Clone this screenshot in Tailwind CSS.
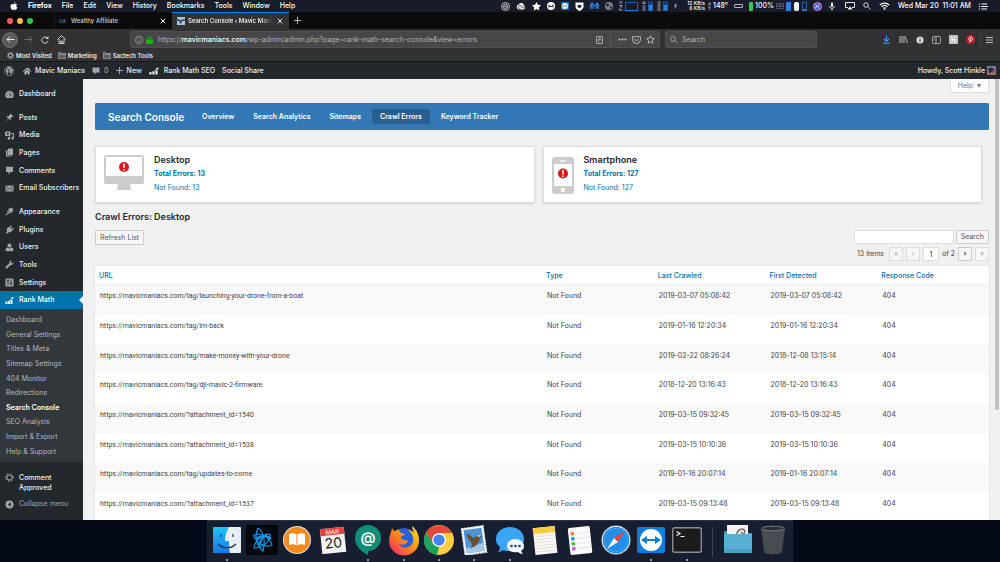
<!DOCTYPE html>
<html lang="en">
<head>
    <meta charset="UTF-8">
    <meta name="viewport" content="width=device-width, initial-scale=1.0">
    <title>Search Console ‹ Mavic Maniacs</title>
    <script src="https://cdn.jsdelivr.net/npm/@tailwindcss/browser@4"></script>
</head>
<body class="h-screen flex flex-col overflow-hidden bg-[#050a18] font-['Inter','Liberation_Sans',sans-serif] text-[7px] leading-[10px] text-[#444]">

    <!-- macOS menu bar -->
    <header class="h-3 shrink-0 flex items-center justify-between bg-[#171c28] text-white pl-[10px] pr-3">
        <nav class="flex items-center gap-[10px] font-medium">
            <svg class="w-2 h-2" viewBox="0 0 16 16" fill="#fff"><path d="M11 0c.1 1.600-1.400 3.400-3 3.400C7.800 1.800 9.400.2 11 0zM14.300 5.300c-2.600 1.600-2 4.800.5 5.800-.6 1.800-2 4.700-3.800 4.700-1.100 0-1.400-.7-2.800-.7s-1.800.7-2.800.7C3.300 15.800 1 12 1 8.500 1 5.400 3 3.900 5 3.900c1.200 0 2.200.8 3.100.8.800 0 2-.9 3.500-.9 1 0 2.100.6 2.700 1.500z"/></svg>
            <span class="font-bold">Firefox</span>
            <span>File</span>
            <span>Edit</span>
            <span>View</span>
            <span>History</span>
            <span>Bookmarks</span>
            <span>Tools</span>
            <span>Window</span>
            <span>Help</span>
        </nav>
        <div class="flex items-center font-medium">
            <div class="flex items-center gap-[6px]">
                <svg class="w-[9px] h-[9px]" viewBox="0 0 18 18" fill="none" stroke="#fff" stroke-width="1.500"><circle cx="9" cy="9" r="7.800"/><circle cx="9" cy="9" r="4"/><path d="M7 9h4"/></svg>
                <svg class="w-[10px] h-[9px]" viewBox="0 0 20 18"><path d="M6 15a5 5 0 0 1-1-9.800A6 6 0 0 1 16 6a5 5 0 0 1-1 9z" fill="#fff"/><path d="M9 12.500a3 3 0 1 1 1-4l3 3.500a2.500 2.500 0 1 0 0-4.500" fill="none" stroke="#171c28" stroke-width="1.600"/></svg>
                <svg class="w-[9px] h-[9px]" viewBox="0 0 18 18" fill="#fff"><path d="M9 0l2.800 5.500 6.200 1-4.400 4.300 1 6.200L9 14.200 3.400 17l1-6.200L0 6.500l6.200-1z"/></svg>
                <svg class="w-2 h-2" viewBox="0 0 16 16"><circle cx="8" cy="8" r="8" fill="#fff"/><path d="M4 11V6l4 4 4-4v5" fill="none" stroke="#171c28" stroke-width="2"/></svg>
                <svg class="w-2 h-2" viewBox="0 0 16 16"><rect width="16" height="16" rx="2" fill="#1b6fc4"/><circle cx="8" cy="8" r="6" fill="#fff"/><path d="M3 8l3-2v1.300h4V6l3 2-3 2V8.700H6V10z" fill="#1b6fc4"/></svg>
                <svg class="w-[9px] h-[9px]" viewBox="0 0 18 18"><path d="M1 1h16v8c0 5-4 7-8 9-4-2-8-4-8-9z" fill="#fff"/><path d="M5 6h8v2c0 2-2 4-4 4s-4-2-4-4z" fill="#171c28"/></svg>
                <svg class="w-[9px] h-2" viewBox="0 0 18 16"><path d="M2 14C0 9 1 3 4 2l5 7 5-7c3 1 4 7 2 12M4 4c-1 4 1 8 3 9M14 4c1 4-1 8-3 9" fill="none" stroke="#2a7fe0" stroke-width="2.600"/></svg>
                <svg class="w-2 h-2" viewBox="0 0 16 16"><circle cx="8" cy="8" r="8" fill="#7b7f88"/><path d="M3 3l4 1 1 3-3 2-3-2zM10 9l4-1-1 4-3 2z" fill="#171c28"/></svg>
            </div>
            <!-- system monitors -->
            <div class="flex items-center gap-[2px] pl-[6px] pr-[6px]">
                <svg class="w-1 h-[10px]" viewBox="0 0 4 10" stroke="#c9cdd6" fill="none"><path d="M.5 1h3M.5 2.500h1M.5 4.500h3M3 6h-2M.5 7.500v1.500h3" stroke-width=".8"/></svg>
                <span class="w-[13px] h-[9px] border border-[#1f5ea8] border-b-[#2a7fe0] mr-[2px]"></span>
                <svg class="w-1 h-[10px]" viewBox="0 0 4 10" stroke="#c9cdd6" fill="none"><path d="M.5 1h3M.5 2.500h3M.5 5h3M.5 7h3M.5 9h3" stroke-width=".8"/></svg>
                <span class="w-[5px] h-[10px] border border-[#1f5ea8] border-t-4 border-t-[#123a6b] bg-[#2a7fe0] mr-[2px]"></span>
                <svg class="w-1 h-[10px]" viewBox="0 0 4 10" stroke="#c9cdd6" fill="none"><path d="M.5 1h3M.5 3h3M.5 5h3M.5 7h3M.5 9h3" stroke-width=".8"/></svg>
                <span class="w-[5px] h-[10px] border border-[#1f5ea8] border-t-4 border-t-[#123a6b] bg-[#2a7fe0]"></span>
            </div>
            <svg class="w-[3px] h-[6px]" viewBox="0 0 3 6" stroke="#c9cdd6" fill="none"><path d="M2.500.5L.5 2.500h2L.5 5.500" stroke-width=".8"/></svg>
            <div class="text-[5px] leading-[5px] text-right pl-[10px] pr-[3px]">
                <div>12 KB/s</div>
                <div>6 KB/s</div>
            </div>
            <svg class="w-[3px] h-[10px] mr-[2px]" viewBox="0 0 4 10" stroke="#c9cdd6" fill="none"><path d="M.5 1h3L1 3h2.500M.5 5h3M.5 7h3M.5 9h3" stroke-width=".8"/></svg>
            <span class="mr-[6px]">148°</span>
            <span class="w-[9px] h-1 rounded-[1px] border border-[#b6bac4] mr-[6px]"></span>
            <span class="w-1 h-[9px] rounded-[1px] bg-[#35c759] mr-[2px]"></span>
            <span>100%</span>
            <svg class="w-2 h-[6px] mx-[2px]" viewBox="0 0 16 12"><rect x=".5" y=".5" width="15" height="11" rx="2" fill="none" stroke="#a2a7b1"/><path d="M3 4h10M3 7h10" stroke="#a2a7b1" stroke-width="1.500" stroke-dasharray="2 1"/></svg>
            <span class="w-[5px] h-[9px] bg-[#2a7fe0] mr-[3px]"></span>
            <span class="w-[5px] h-[9px] rounded-[2px] bg-white mr-[3px]"></span>
            <span class="w-[5px] h-[9px] border border-[#2a5f9e] border-b-2 border-b-[#2a7fe0] mr-[6px]"></span>
            <svg class="w-[9px] h-[9px] mr-[7px]" viewBox="0 0 18 18"><circle cx="9" cy="9" r="8" fill="#3d5bd0" stroke="#ef7fc4" stroke-width="2"/><path d="M4 12L13 5M5 6l8 7" fill="none" stroke="#fff" stroke-width="1.600"/></svg>
            <svg class="w-[6px] h-[9px] mr-[10px]" viewBox="0 0 12 18"><rect x="4" y="1" width="4" height="9" rx="2" fill="#fff"/><path d="M1 8c0 6 10 6 10 0M6 12v5" fill="none" stroke="#fff" stroke-width="1.600"/></svg>
            <svg class="w-[10px] h-2 mr-2" viewBox="0 0 20 16"><path d="M6 11H1V1h18v10h-5" fill="none" stroke="#fff" stroke-width="1.800"/><path d="M10 9l5 6H5z" fill="#fff"/></svg>
            <svg class="w-2 h-2 mr-2" viewBox="0 0 16 16" fill="none" stroke="#fff" stroke-width="1.600"><circle cx="6" cy="6" r="4.500"/><path d="M9.500 9.500l5.500 5.500"/></svg>
            <svg class="w-[11px] h-2 mr-2" viewBox="0 0 22 16" fill="none" stroke="#fff" stroke-width="2.200"><path d="M1.500 6a14 14 0 0 1 19 0M5 9.500a9 9 0 0 1 12 0M8.500 12.500a4 4 0 0 1 5 0"/><circle cx="11" cy="14.500" r=".6"/></svg>
            <span class="whitespace-pre mr-2">Wed Mar 20  11:01 AM</span>
            <svg class="w-[9px] h-[7px]" viewBox="0 0 18 14" stroke="#fff" stroke-width="2"><path d="M0 2h2M0 7h2M0 12h2M5 2h11M5 7h13M5 12h11"/></svg>
        </div>
    </header>

    <!-- Browser tabs -->
    <div class="h-[17px] shrink-0 flex items-stretch bg-[#0b0b0b] text-[#d0d0d2] text-[6px] font-medium">
        <div class="w-[54px] flex items-center gap-1 pl-[7px]">
            <span class="size-[6px] rounded-full bg-[#fc5b57]"></span>
            <span class="size-[6px] rounded-full bg-[#fdbc40]"></span>
            <span class="size-[6px] rounded-full bg-[#34c84a]"></span>
        </div>
        <div class="w-[118px] flex items-center border-l border-[#1d1d1d] pl-1 pr-[6px]">
            <span class="text-[5px] font-bold text-[#41688e] w-3">UA</span>
            <span class="flex-1">Wealthy Affiliate</span>
            <button class="flex" aria-label="Close tab"><svg class="size-[6px]" viewBox="0 0 12 12" stroke="#fff" stroke-width="1.800"><path d="M1.500 1.500l9 9M10.500 1.500l-9 9"/></svg></button>
        </div>
        <div class="w-[117px] flex items-center bg-[#323234] border-t border-[#0a84ff] pl-[5px] pr-[6px] text-white">
            <svg class="size-2 mr-[3px] shrink-0" viewBox="0 0 16 16"><rect width="16" height="16" fill="#a9c4dc"/><path d="M0 3l6 3 10-2v3L9 9v4H5V9L0 7z" fill="#3a4b62"/></svg>
            <span class="flex-1 overflow-hidden whitespace-nowrap mr-1 [mask-image:linear-gradient(to_right,#000_85%,transparent)]">Search Console ‹ Mavic Maniacs</span>
            <button class="flex" aria-label="Close tab"><svg class="size-[6px]" viewBox="0 0 12 12" stroke="#fff" stroke-width="1.800"><path d="M1.500 1.500l9 9M10.500 1.500l-9 9"/></svg></button>
        </div>
        <button class="flex items-center pl-[5px]" aria-label="New tab"><svg class="size-[7px]" viewBox="0 0 14 14" stroke="#c9c9cb" stroke-width="1.800"><path d="M7 0v14M0 7h14"/></svg></button>
    </div>

    <!-- Navigation toolbar -->
    <div class="h-[21px] shrink-0 flex items-center bg-[#323234] text-[#b1b1b3] pl-[2px] pr-[7px]">
        <button class="size-4 rounded-full bg-[#5a5a5c] border border-[#6e6e70] flex items-center justify-center" aria-label="Back"><svg class="size-[9px]" viewBox="0 0 18 18" fill="none" stroke="#e6e6e8" stroke-width="2"><path d="M17 9H2M8 3L2 9l6 6"/></svg></button>
        <button class="ml-[6px]" aria-label="Forward"><svg class="size-[9px]" viewBox="0 0 18 18" fill="none" stroke="#6f6f71" stroke-width="2"><path d="M1 9h15M10 3l6 6-6 6"/></svg></button>
        <button class="ml-2" aria-label="Reload"><svg class="size-[8px]" viewBox="0 0 16 16" fill="none" stroke="#d6d6d8" stroke-width="2"><path d="M13 4.500A6.300 6.300 0 1 0 14 10"/><path d="M15 0v6H9z" fill="#d6d6d8" stroke="none"/></svg></button>
        <button class="ml-2" aria-label="Home"><svg class="size-[9px]" viewBox="0 0 18 18" fill="none" stroke="#e0e0e2" stroke-width="1.800"><path d="M1 9l8-8 8 8M4 8v9h10V8M7.500 17v-5h3v5"/></svg></button>
        <div class="ml-[64px] w-[530px] h-[17px] flex items-center rounded-[2px] bg-[#474749] border border-[#505052] px-1">
            <svg class="size-2" viewBox="0 0 16 16" fill="none" stroke="#b1b1b3" stroke-width="1.500"><circle cx="8" cy="8" r="7"/><path d="M8 7v5M8 4v1.500"/></svg>
            <svg class="w-[7px] h-2 ml-[3px] mr-[5px]" viewBox="0 0 14 16"><rect y="7" width="14" height="9" rx="1" fill="#12bc00"/><path d="M3.500 8V5a3.500 3.500 0 0 1 7 0v3" fill="none" stroke="#12bc00" stroke-width="2"/></svg>
            <span class="flex-1 whitespace-nowrap">https://<span class="font-medium text-white">mavicmaniacs.com</span>/wp-admin/admin.php?page=rank-math-search-console&amp;view=errors</span>
            <svg class="w-[7px] h-2" viewBox="0 0 14 16" fill="none" stroke="#c4c4c6" stroke-width="1.600"><rect x="1" y="1" width="12" height="14" rx="1"/><path d="M4 4.500h6M4 7.500h6M4 10.500h3"/></svg>
            <span class="w-px h-3 bg-[#5c5c5e] mx-[7px]"></span>
            <svg class="w-[9px] h-[3px]" viewBox="0 0 18 6" fill="#c4c4c6"><circle cx="3" cy="3" r="2"/><circle cx="9" cy="3" r="2"/><circle cx="15" cy="3" r="2"/></svg>
            <svg class="w-[9px] h-2 mx-[5px]" viewBox="0 0 18 16" fill="none" stroke="#c4c4c6" stroke-width="1.800"><path d="M1 1.500h16V7a8 8 0 0 1-16 0zM5 6l4 4 4-4"/></svg>
            <svg class="size-[9px]" viewBox="0 0 18 18" fill="none" stroke="#c4c4c6" stroke-width="1.800"><path d="M9 1.500l2.300 4.900 5.200.7-3.800 3.700 1 5.400L9 13.500l-4.700 2.700 1-5.400L1.500 7.100l5.200-.7z"/></svg>
        </div>
        <label class="ml-[5px] w-[152px] h-[17px] flex items-center gap-1 rounded-[2px] bg-[#474749] border border-[#505052] px-1">
            <svg class="size-2 shrink-0" viewBox="0 0 16 16" fill="none" stroke="#b1b1b3" stroke-width="1.600"><circle cx="6" cy="6" r="4.800"/><path d="M9.500 9.500l5.500 5.500"/></svg>
            <input type="text" placeholder="Search" aria-label="Search the web" class="w-full bg-transparent outline-none placeholder:text-[#b1b1b3]">
        </label>
        <div class="ml-auto flex items-center gap-2">
            <svg class="size-[9px]" viewBox="0 0 18 18" fill="none" stroke="#3f9bf0" stroke-width="2.200"><path d="M9 1v11M4 8l5 5 5-5M2 16.500h14"/></svg>
            <svg class="size-[9px]" viewBox="0 0 18 18" stroke="#b9b9bb" stroke-width="2"><path d="M2 2v14M6 2v14M10 2v14M12.500 3L17 16"/></svg>
            <svg class="size-[8px]" viewBox="0 0 16 16"><circle cx="8" cy="8" r="7" fill="#dcdcde"/><path d="M8 7v5M8 3.500v2" stroke="#323234" stroke-width="2.200"/></svg>
            <svg class="w-[9px] h-2" viewBox="0 0 18 16" fill="none" stroke="#c4c4c6" stroke-width="1.600"><rect x="1" y="1" width="16" height="14" rx="2"/><path d="M8 1v14M3.500 5h2M3.500 8h2"/></svg>
            <svg class="size-[9px]" viewBox="0 0 18 18"><rect width="18" height="18" rx="1" fill="#c2c2c4"/><path d="M6 4v10M6 9h6v5M12 4v2" stroke="#f5f5f5" stroke-width="2.400" fill="none"/></svg>
            <svg class="size-[9px]" viewBox="0 0 18 18"><circle cx="9" cy="9" r="9" fill="#cb1a2a"/><path d="M7 15l2.200-8.500M6 9.500C4.500 6 7 4 9.300 4c5.200 0 4.200 8 1 7.500-1 0-1.800-.6-2-1.300" fill="none" stroke="#fff" stroke-width="1.700"/></svg>
            <span class="w-px h-[17px] bg-[#3f3f41] -ml-[3px]"></span>
            <svg class="w-[7px] h-2 -ml-[3px]" viewBox="0 0 14 16" stroke="#c9c9cb" stroke-width="1.800"><path d="M0 3h14M0 8h14M0 13h14"/></svg>
        </div>
    </div>

    <!-- Bookmarks toolbar -->
    <nav class="h-[11px] shrink-0 flex items-center gap-[6px] bg-[#323234] text-white text-[6px] font-medium pl-[7px]">
        <a href="#" class="flex items-center gap-[2px]"><svg class="size-[7px]" viewBox="0 0 16 16" fill="none" stroke="#e0e0e2" stroke-width="2"><circle cx="8" cy="8" r="4.500"/><path stroke-dasharray="2 2.700" d="M8 1a7 7 0 1 1 0 14A7 7 0 0 1 8 1"/></svg>Most Visited</a>
        <a href="#" class="flex items-center gap-[2px]"><svg class="w-2 h-[7px]" viewBox="0 0 16 14" fill="#5a5a5c" stroke="#a0a0a2" stroke-width="1.500"><path d="M1 13V1h5l1.500 2H15v10zM1 5h14"/></svg>Marketing</a>
        <a href="#" class="flex items-center gap-[2px]"><svg class="w-2 h-[7px]" viewBox="0 0 16 14" fill="#5a5a5c" stroke="#a0a0a2" stroke-width="1.500"><path d="M1 13V1h5l1.500 2H15v10zM1 5h14"/></svg>Sactech Tools</a>
    </nav>

    <!-- WordPress admin bar -->
    <div class="h-[18px] shrink-0 flex items-center bg-[#23282d] border-t border-[#18191b] text-[#eee] font-medium pl-1 pr-1">
        <svg class="size-[10px] mr-[9px]" viewBox="0 0 20 20"><circle cx="10" cy="10" r="9.200" fill="none" stroke="#a0a5aa" stroke-width="1.200"/><path d="M2.500 7l4.700 11 2.500-7L8 6.500H6.500M17 6c1 3 0 5-1 7l-2 5-4-11.500M12 6.500h-2M4 5a7.500 7.500 0 0 1 11-1c-2 1-.5 3 .5 5 .5 2-.5 4-1.500 5L11.500 6.500h1.200" fill="#a0a5aa"/></svg>
        <a href="#" class="flex items-center gap-1"><svg class="size-2" viewBox="0 0 16 16" fill="#c3c6c9"><path d="M8 1l3 3V2h2v4l3 3-1.500 1.200L8 4 1.500 10.200 0 9zM3 10.500L8 6l5 4.500V15H9.500v-4h-3v4H3z"/></svg>Mavic Maniacs</a>
        <a href="#" class="flex items-center gap-1 ml-[7px] text-[#a0a5aa]"><svg class="size-2" viewBox="0 0 16 16" fill="#a0a5aa"><path d="M2 1h12a1 1 0 0 1 1 1v8a1 1 0 0 1-1 1H9l-4 4v-4H2a1 1 0 0 1-1-1V2a1 1 0 0 1 1-1z"/></svg>0</a>
        <a href="#" class="flex items-center gap-1 ml-[7px]"><svg class="size-[7px]" viewBox="0 0 14 14" stroke="#a0a5aa" stroke-width="2.200"><path d="M7 0v14M0 7h14"/></svg>New</a>
        <a href="#" class="flex items-center gap-1 ml-[7px]"><svg class="w-[11px] h-2" viewBox="0 0 22 16" fill="#fff"><path d="M1 12h4v3H1zM7 10h4v5H7zM13 7h4v8h-4zM14 2l5-1-1 5z"/><path d="M0 11.500c7 0 11-3 16-8" fill="none" stroke="#fff" stroke-width="1.600"/></svg>Rank Math SEO</a>
        <a href="#" class="ml-[7px]">Social Share</a>
        <a href="#" class="ml-auto flex items-center gap-[2px]">Howdy, Scott Hinkle<svg class="size-[9px]" viewBox="0 0 18 18"><rect width="18" height="18" fill="#6d7f9f"/><path d="M0 12h18v6H0z" fill="#9b6f6c"/><path d="M2 5l7-2 6 4-1 6-4-2-5 4z" fill="#2b2632"/><path d="M11 8h3v4h-3z" fill="#b83a3a"/></svg></a>
    </div>

    <div class="flex-1 min-h-0 flex bg-[#f1f1f1]">

        <!-- Admin menu -->
        <aside class="w-[83px] shrink-0 bg-[#23282d] text-[#eee] font-medium overflow-hidden pt-[6px] [&_a]:flex [&_a]:items-center">
            <div class="h-[18px] flex [&_a]:gap-[5px] [&_a]:pl-[5px]">
                <a href="#"><svg class="size-[9px]" viewBox="0 0 18 18"><path d="M3 16a8.500 8.500 0 1 1 12 0z" fill="#a0a5aa"/><path d="M9 13l3-6M3.500 10h2M5 5.500l1.500 1.500M9 3.500v2M14.500 10h-2" stroke="#23282d" stroke-width="1.500"/></svg>Dashboard</a>
            </div>
            <div class="h-[88px] mt-[6px] flex flex-col [&_a]:flex-1 [&_a]:gap-[5px] [&_a]:pl-[5px]">
                <a href="#"><svg class="size-[9px]" viewBox="0 0 18 18" fill="#a0a5aa"><path d="M11 1l6 6-1.500 1-1-.3-3 3c.5 1.500 0 3-1 4L7 11l-5.500 6L1 16.500 6.500 10.500 3 7c1-1 2.600-1.500 4-1l3.200-3-.2-1z"/></svg>Posts</a>
                <a href="#"><svg class="size-[9px]" viewBox="0 0 18 18" fill="none" stroke="#a0a5aa" stroke-width="2"><path d="M1 2h9v7H1z" fill="#a0a5aa"/><circle cx="5.500" cy="5.500" r="2" fill="#23282d" stroke="none"/><path d="M12 5h5v9M9 16V11"/><circle cx="7.500" cy="15" r="1.800" fill="#a0a5aa"/><circle cx="15" cy="14.500" r="1.800" fill="#a0a5aa"/></svg>Media</a>
                <a href="#"><svg class="size-[9px]" viewBox="0 0 18 18" fill="#a0a5aa"><path d="M6 1h10v13H6zM2 4h3v11h8v2H2z"/></svg>Pages</a>
                <a href="#"><svg class="size-[9px]" viewBox="0 0 18 18" fill="#a0a5aa"><path d="M3 1.500h12a1 1 0 0 1 1 1V11a1 1 0 0 1-1 1h-4l-4 5v-5H3a1 1 0 0 1-1-1V2.500a1 1 0 0 1 1-1z"/></svg>Comments</a>
                <a href="#" class="whitespace-nowrap"><svg class="size-[9px] shrink-0" viewBox="0 0 18 18"><rect x="1" y="3" width="16" height="12" fill="#a0a5aa"/><path d="M2 4.500l7 6 7-6M2 13.500l4.500-4M16 13.500l-4.500-4" fill="none" stroke="#23282d" stroke-width="1.400"/></svg>Email Subscribers</a>
            </div>
            <div class="h-[106px] mt-[6px] flex flex-col [&_a]:flex-1 [&_a]:gap-[5px] [&_a]:pl-[5px]">
                <a href="#"><svg class="size-[9px]" viewBox="0 0 18 18" fill="#a0a5aa"><path d="M9 2l3 1 2-2 3 3-2 2 1 3-4 3-6-6zM5.500 7l5.500 5.500-2 1-2-1L2.500 17 1 15.500 5.500 11l-1-2z"/></svg>Appearance</a>
                <a href="#"><svg class="size-[9px]" viewBox="0 0 18 18" fill="#a0a5aa"><path d="M12 1l2 1-3 4 2 2 4-3 1 1.500-3 4c-2 3-4 5-8 4l-3 3L2 16l2-3c-2-4 0-7 3-9l1 1z"/></svg>Plugins</a>
                <a href="#"><svg class="size-[9px]" viewBox="0 0 18 18" fill="#a0a5aa"><circle cx="9" cy="5" r="4"/><path d="M1.500 16.500V12c0-2 2-3 4-3L9 11l3.500-2c2 0 4 1 4 3v4.500z"/></svg>Users</a>
                <a href="#"><svg class="size-[9px]" viewBox="0 0 18 18" fill="#a0a5aa"><path d="M16.700 4.500c.8 3-2 6.500-5.500 5.500L4 17c-1.500 1-4-1-3-3l7.500-7C7.500 3.500 10.500.500 14 1.300L11.500 4l.5 2 2 .6z"/></svg>Tools</a>
                <a href="#"><svg class="size-[9px]" viewBox="0 0 18 18"><rect x="1" y="1" width="16" height="16" fill="#a0a5aa"/><path d="M6 3v12M12 3v12M3.500 6h5M9.500 11h5" stroke="#23282d" stroke-width="1.600"/></svg>Settings</a>
                <a href="#" class="bg-[#0073aa] text-white relative after:absolute after:right-0 after:border-4 after:border-transparent after:border-r-[#f1f1f1]"><svg class="size-[9px]" viewBox="0 0 18 18" fill="#fff"><path d="M1 13h4v3H1zM6 11h4v5H6zM11 8h4v8h-4zM12 3l5-1-1 5z"/><path d="M0 12.500c6 0 10-3 14-8" fill="none" stroke="#fff" stroke-width="1.600"/></svg>Rank Math</a>
            </div>
            <div class="h-[153px] pt-1 pb-[3px] flex flex-col bg-[#32373c] text-[#b4b9be] font-normal [&_a]:flex-1 [&_a]:pl-[6px]">
                <a href="#">Dashboard</a>
                <a href="#">General Settings</a>
                <a href="#">Titles &amp; Meta</a>
                <a href="#">Sitemap Settings</a>
                <a href="#">404 Monitor</a>
                <a href="#">Redirections</a>
                <a href="#" class="font-semibold text-white">Search Console</a>
                <a href="#">SEO Analysis</a>
                <a href="#">Import &amp; Export</a>
                <a href="#">Help &amp; Support</a>
            </div>
            <div class="mt-[11px] flex flex-col gap-[6px] [&_a]:gap-[5px] [&_a]:pl-[5px]">
                <a href="#" class="items-start!"><svg class="size-[9px]" viewBox="0 0 18 18" fill="none" stroke="#a0a5aa"><circle cx="9" cy="9" r="5" stroke-width="2"/><circle cx="9" cy="9" r="7.300" stroke-width="2.600" stroke-dasharray="2.800 2.930"/></svg><span>Comment<br>Approved</span></a>
                <button class="flex items-center gap-[5px] pl-[5px] font-normal text-[#a0a5aa]"><svg class="size-[9px]" viewBox="0 0 18 18"><circle cx="9" cy="9" r="8" fill="#a0a5aa"/><path d="M11.500 4.500v9L5.500 9z" fill="#23282d"/></svg>Collapse menu</button>
            </div>
        </aside>

        <main class="flex-1 min-w-0 pl-3 pr-[6px] overflow-hidden">
            <div class="flex justify-end">
                <button class="h-[14px] px-[7px] flex items-center gap-1 bg-white border border-t-0 border-[#ddd] text-[#72777c]">Help <svg class="w-1 h-1" viewBox="0 0 8 8" fill="#72777c"><path d="M0 0h8L4 8z"/></svg></button>
            </div>

            <nav class="mt-[10px] h-[27px] flex items-center gap-[3px] rounded-[1px] bg-[#3378b5] text-white font-semibold pl-[13px] [&_a]:px-2 [&_a]:h-[15px] [&_a]:flex [&_a]:items-center [&_a]:rounded-[2px]">
                <h1 class="w-[83px] text-[10px]">Search Console</h1>
                <a href="#">Overview</a>
                <a href="#">Search Analytics</a>
                <a href="#">Sitemaps</a>
                <a href="#" class="bg-[#295f90]">Crawl Errors</a>
                <a href="#">Keyword Tracker</a>
            </nav>

            <div class="mt-4 mr-[7px] grid grid-cols-2 gap-2">
                <a href="#" class="h-[57px] flex bg-white border border-[#ddd] shadow-sm pl-2 pt-2">
                    <svg class="w-[50px] h-[35px] shrink-0 pr-[10px]" viewBox="0 0 40 35"><rect y="0" width="40" height="29" rx="2.500" fill="#ccc"/><rect x="2" y="2" width="36" height="19" fill="#fff"/><path d="M14 29h12l1 6H13z" fill="#ccc"/><circle cx="20" cy="12" r="5" fill="#dd1414"/><path d="M20 8.500v4.500M20 14v1.500" stroke="#fff" stroke-width="1.600"/></svg>
                    <div class="text-[#0073aa]">
                        <h3 class="text-[9px] font-semibold text-[#23282d]">Desktop</h3>
                        <p class="mt-1 font-bold">Total Errors: 13</p>
                        <p class="mt-1">Not Found: 13</p>
                    </div>
                </a>
                <a href="#" class="h-[57px] flex bg-white border border-[#ddd] shadow-sm pl-2 pt-2">
                    <svg class="w-[32px] h-[37px] shrink-0 pr-[10px] mt-[2px]" viewBox="0 0 22 37"><rect width="22" height="37" rx="3" fill="#ccc"/><rect x="2" y="7" width="18" height="22" fill="#fff"/><path d="M8 4h6" stroke="#fff" stroke-width="1.200"/><circle cx="11" cy="33" r="2.200" fill="#fff"/><circle cx="11" cy="16.500" r="5" fill="#dd1414"/><path d="M11 13v4.500M11 18.500V20" stroke="#fff" stroke-width="1.600"/></svg>
                    <div class="text-[#0073aa]">
                        <h3 class="text-[9px] font-semibold text-[#23282d]">Smartphone</h3>
                        <p class="mt-1 font-bold">Total Errors: 127</p>
                        <p class="mt-1">Not Found: 127</p>
                    </div>
                </a>
            </div>

            <h2 class="mt-[9px] text-[9px] font-semibold text-[#23282d]">Crawl Errors: Desktop</h2>

            <div class="mt-2 flex items-start justify-between">
                <button class="h-[15px] px-1 bg-[#f7f7f7] border border-[#ccc] text-[#555] rounded-[1px]">Refresh List</button>
                <div class="flex flex-col items-end gap-[3px]">
                    <div class="flex gap-[2px]">
                        <input type="search" aria-label="Search errors" class="w-[100px] h-[14px] bg-white border border-[#ddd] outline-none px-1">
                        <button class="h-[14px] px-1 bg-[#f7f7f7] border border-[#ccc] text-[#555] rounded-[1px]">Search</button>
                    </div>
                    <div class="flex items-center gap-[3px] text-[#444]">
                        <span class="mr-[2px]">13 items</span>
                        <button class="w-[14px] h-[14px] bg-[#f7f7f7] border border-[#ddd] text-[#a0a5aa]" disabled>«</button>
                        <button class="w-[14px] h-[14px] bg-[#f7f7f7] border border-[#ddd] text-[#a0a5aa]" disabled>‹</button>
                        <input type="text" value="1" aria-label="Current page" class="w-4 h-[14px] bg-white border border-[#ddd] text-center text-[#32373c] outline-none">
                        <span>of 2</span>
                        <button class="w-[14px] h-[14px] bg-[#f7f7f7] border border-[#ccc] font-bold">›</button>
                        <button class="w-[14px] h-[14px] bg-[#f7f7f7] border border-[#ddd] text-[#a0a5aa]">»</button>
                    </div>
                </div>
            </div>

            <table class="mt-[5px] w-full table-fixed border-separate border-spacing-0 bg-white outline outline-[#e5e5e5] [&_th]:text-left [&_th]:font-medium [&_th]:h-[19px] [&_th]:pt-[2px] [&_th]:pl-1 [&_th]:text-[#0073aa] [&_th]:border-b [&_th]:border-[#eee] [&_td]:align-top [&_td]:pl-[5px] [&_td]:pt-[6px]">
                <thead>
                    <tr>
                        <th class="w-1/2"><a href="#">URL</a></th>
                        <th><a href="#">Type</a></th>
                        <th><a href="#">Last Crawled</a></th>
                        <th><a href="#">First Detected</a></th>
                        <th><a href="#">Response Code</a></th>
                    </tr>
                </thead>
                <tbody class="[&_tr]:h-[30px] [&_tr:nth-child(3n)]:h-[29px] [&_tr:nth-child(odd)]:bg-[#f9f9f9] [&_td:first-child]:font-['Roboto','Liberation_Sans',sans-serif]">
                    <tr><td>https://mavicmaniacs.com/tag/launching-your-drone-from-a-boat</td><td>Not Found</td><td>2019-03-07 05:08:42</td><td>2019-03-07 05:08:42</td><td>404</td></tr>
                    <tr><td>https://mavicmaniacs.com/tag/im-back</td><td>Not Found</td><td>2019-01-16 12:20:34</td><td>2019-01-16 12:20:34</td><td>404</td></tr>
                    <tr><td>https://mavicmaniacs.com/tag/make-money-with-your-drone</td><td>Not Found</td><td>2019-02-22 08:26:24</td><td>2018-12-08 13:15:14</td><td>404</td></tr>
                    <tr><td>https://mavicmaniacs.com/tag/dji-mavic-2-firmware</td><td>Not Found</td><td>2018-12-20 13:16:43</td><td>2018-12-20 13:16:43</td><td>404</td></tr>
                    <tr><td>https://mavicmaniacs.com/?attachment_id=1540</td><td>Not Found</td><td>2019-03-15 09:32:45</td><td>2019-03-15 09:32:45</td><td>404</td></tr>
                    <tr><td>https://mavicmaniacs.com/?attachment_id=1538</td><td>Not Found</td><td>2019-03-15 10:10:36</td><td>2019-03-15 10:10:36</td><td>404</td></tr>
                    <tr><td>https://mavicmaniacs.com/tag/updates-to-come</td><td>Not Found</td><td>2019-01-16 20:07:14</td><td>2019-01-16 20:07:14</td><td>404</td></tr>
                    <tr><td>https://mavicmaniacs.com/?attachment_id=1537</td><td>Not Found</td><td>2019-03-15 09:13:48</td><td>2019-03-15 09:13:48</td><td>404</td></tr>
                </tbody>
            </table>
        </main>

        <!-- page scrollbar -->
        <div class="w-[5px] shrink-0 bg-[#f1f1f1]"><div class="w-1 h-3/4 rounded-b-sm bg-[#c1c1c1]"></div></div>
    </div>

    <!-- Dock -->
    <footer class="h-[42px] shrink-0 flex justify-center bg-[#050a18]">
        <div class="w-[586px] flex items-stretch bg-[#171e30] border-t border-[#2a3145] px-[2px] [&_button]:flex-1 [&_button]:flex [&_button]:flex-col [&_button]:items-center [&_button]:justify-center [&_button]:relative [&_button]:pb-[3px]">
            <button aria-label="Finder" class="after:absolute after:bottom-px after:size-[2px] after:rounded-full after:bg-[#b8bfd0]">
                <svg class="size-7" viewBox="0 0 28 28"><defs><linearGradient id="finder" x2="0" y2="1"><stop stop-color="#1fc3f8"/><stop offset="1" stop-color="#1777e8"/></linearGradient></defs><rect y="1" width="28" height="26" rx="1" fill="#e8eef6"/><path d="M0 1h16c-2 4-4 8-4 14h4c0 5 0 8 1 12H0z" fill="url(#finder)"/><path d="M8 8v3M20 8v3M5 18c5 5 13 5 18 0" fill="none" stroke="#173350" stroke-width="1.200"/></svg>
            </button>
            <button aria-label="Battle.net">
                <svg class="size-8" viewBox="0 0 32 32"><rect y="1" width="32" height="30" rx="2" fill="#02060d"/><g fill="none" stroke="#1596e6" stroke-width="1.200"><path d="M7 12c8-5 17 2 19 9-6 3-15-1-18-9"/><path d="M12 4c5 3 8 12 5 23-6-5-9-14-5-23"/><path d="M24 10c1 7-7 14-16 14 0-6 7-13 16-14"/><path d="M10 15c5-4 11-4 15 0M13 22c2-6 3-9 8-12" stroke-width="2"/></g></svg>
            </button>
            <button aria-label="Books">
                <svg class="size-7" viewBox="0 0 28 28"><circle cx="14" cy="14" r="14" fill="#e9e1d8"/><circle cx="14" cy="14" r="13" fill="#f38b1c"/><path d="M14 9c-2-2-5-2-8-1v11c3-1 6-1 8 1 2-2 5-2 8-1V8c-3-1-6-1-8 1z" fill="#fff"/><path d="M14 9v11" stroke="#f38b1c"/></svg>
            </button>
            <button aria-label="Calendar">
                <svg class="size-7" viewBox="0 0 28 28"><g transform="rotate(-6 14 14)"><rect x="2" y="2" width="24" height="25" fill="#f5f4f2"/><path d="M2 2h24v7H2z" fill="#e2413d"/><text x="14" y="8" text-anchor="middle" font-size="6" fill="#fff">MAR</text><text x="14" y="22" text-anchor="middle" font-size="14" fill="#222">20</text></g></svg>
            </button>
            <button aria-label="Hangouts Chat" class="after:absolute after:bottom-px after:size-[2px] after:rounded-full after:bg-[#b8bfd0]">
                <svg class="w-7 h-[30px]" viewBox="0 0 28 30"><path d="M14 0a13 13 0 0 1 0 26v4C6 26 1 20 1 13A13 13 0 0 1 14 0z" fill="#0f8f76"/><text x="14" y="18" text-anchor="middle" font-size="15" font-weight="600" fill="#fff">@</text></svg>
            </button>
            <button aria-label="Firefox" class="after:absolute after:bottom-px after:size-[2px] after:rounded-full after:bg-[#b8bfd0]">
                <svg class="w-[30px] h-[31px]" viewBox="0 0 30 31"><defs><linearGradient id="fox" x1="1" y1="0" x2="0" y2="1"><stop stop-color="#ffe32b"/><stop offset=".5" stop-color="#ff8a16"/><stop offset="1" stop-color="#f0197a"/></linearGradient></defs><circle cx="15" cy="15" r="12" fill="#2b60d6"/><path d="M3 3c1 2 2 3 3 3l4-2c0 3 1 4 6 5-1 2-5 2-4 4 1 3 6 2 7 3-1 3-6 5-9 3 3 6 12 4 14-2 1-5-1-9-5-12 3 0 5 2 6 3-1-3-2-5-2-7 5 4 7 9 7 14a15 15 0 0 1-30 1C0 11 2 8 3 3z" fill="url(#fox)"/></svg>
            </button>
            <button aria-label="Chrome" class="after:absolute after:bottom-px after:size-[2px] after:rounded-full after:bg-[#b8bfd0]">
                <svg class="size-[30px]" viewBox="0 0 30 30"><circle cx="15" cy="15" r="15" fill="#ffce44"/><path d="M2 7.500L9 18.500 15 15 15 8H28A15 15 0 0 0 2 7.500z" fill="#de4a3c"/><path d="M2 7.500L9 18.500l6 3.500-2 8A15 15 0 0 1 2 7.500z" fill="#1ba35c"/><circle cx="15" cy="15" r="7" fill="#f3f3f3"/><circle cx="15" cy="15" r="5.600" fill="#4384f3"/></svg>
            </button>
            <button aria-label="Mail" class="after:absolute after:bottom-px after:size-[2px] after:rounded-full after:bg-[#b8bfd0]">
                <svg class="w-7 h-[30px]" viewBox="0 0 28 30"><g transform="rotate(-8 14 15)"><rect x="3" y="2" width="22" height="27" fill="#f2f3f5" stroke="#f2f3f5" stroke-dasharray="2 1"/><rect x="5" y="4" width="18" height="23" fill="#4b94d6"/><path d="M5 22l18-3v8H5z" fill="#a3c7e6"/><path d="M7 8c3 1 5 3 7 5l5-2 4 1-3 2c-1 3-3 5-5 7l-6 2 3-4c-2-3-4-7-5-11z" fill="#6a4f35"/><path d="M18 11l4 0-3 2z" fill="#f0efe9"/></g></svg>
            </button>
            <button aria-label="Messages" class="after:absolute after:bottom-px after:size-[2px] after:rounded-full after:bg-[#b8bfd0]">
                <svg class="w-[30px] h-7" viewBox="0 0 30 28"><path d="M15 1c8 0 14 5 14 12s-6 12-14 12c-3 0-5 0-7-1-1 1-3 2-5 2 1-1 2-3 2-5-3-2-4-5-4-8C1 6 7 1 15 1z" fill="#38a5f7"/><path d="M20 13c5 0 9 3 9 7 0 2-1 4-3 5l2 3c-2 0-4-1-5-2-7 1-11-2-11-6s4-7 8-7z" fill="#f1f7fe"/><g fill="#1c4a80"><circle cx="16.500" cy="20" r="1.300"/><circle cx="20.500" cy="20" r="1.300"/><circle cx="24.500" cy="20" r="1.300"/></g></svg>
            </button>
            <button aria-label="Notes">
                <svg class="w-7 h-[30px]" viewBox="0 0 28 30"><g transform="rotate(-6 14 15)"><rect x="3" y="2" width="22" height="27" fill="#fbfaf5"/><path d="M3 2h22v6H3z" fill="#f9cb3e"/><path d="M4 11h20M4 14h20M4 17h20M4 20h20M4 23h20M4 26h20" stroke="#d9d7d0" stroke-width=".8"/></g></svg>
            </button>
            <button aria-label="Reminders">
                <svg class="w-7 h-[30px]" viewBox="0 0 28 30"><g transform="rotate(-6 14 15)"><rect x="3" y="2" width="22" height="27" rx="1.500" fill="#fbfbfb"/><path d="M10 8h14M10 13h14M10 18h14M10 23h14" stroke="#dedede" stroke-width=".8"/><circle cx="7" cy="8" r="2" fill="#f38532"/><circle cx="7" cy="13" r="2" fill="#2d9bf0"/><circle cx="7" cy="18" r="2" fill="#4fc14b"/><circle cx="7" cy="23" r="2" fill="#c264dd"/></g></svg>
            </button>
            <button aria-label="Safari">
                <svg class="size-[30px]" viewBox="0 0 30 30"><circle cx="15" cy="15" r="14.500" fill="#dfe4ea"/><circle cx="15" cy="15" r="13.300" fill="#1f8fe8"/><circle cx="15" cy="15" r="11.500" fill="none" stroke="#bfe0fa" stroke-dasharray=".6 1.800"/><path d="M24 6L13 13l4 4z" fill="#f0433c"/><path d="M6 24l7-11 4 4z" fill="#f3f3f3"/></svg>
            </button>
            <button aria-label="TeamViewer" class="after:absolute after:bottom-px after:size-[2px] after:rounded-full after:bg-[#b8bfd0]">
                <svg class="size-7" viewBox="0 0 28 28"><rect y="1" width="28" height="26" rx="2" fill="#0d7ddb"/><circle cx="14" cy="14" r="11" fill="#fff"/><path d="M4 14l6-4v3h8v-3l6 4-6 4v-3h-8v3z" fill="#0d7ddb"/></svg>
            </button>
            <button aria-label="Terminal" class="after:absolute after:bottom-px after:size-[2px] after:rounded-full after:bg-[#b8bfd0]">
                <svg class="w-[30px] h-[26px]" viewBox="0 0 30 26"><rect x=".7" y=".7" width="28.600" height="24.600" rx="2" fill="#1c1c1c" stroke="#8b8e93" stroke-width="1.400"/><path d="M4.500 4.500L8 6.500l-3.500 2M8.500 9.500h4" fill="none" stroke="#fff" stroke-width="1.100"/></svg>
            </button>
            <div class="w-4 flex items-center justify-center"><span class="w-px h-[30px] bg-[#3c4358]"></span></div>
            <button aria-label="Documents">
                <svg class="w-[30px] h-[30px]" viewBox="0 0 30 30"><path d="M1 6h9l2 2h17v4H1z" fill="#3b93bb"/><path d="M4 0h21v9H4z" fill="#f4f4f4"/><path d="M14 9c0-4 6-7 8-3l-1 3M18 7l2 2" fill="none" stroke="#6a6a6a" stroke-width="1.400"/><path d="M1 9h28v19H1z" fill="#57afd2"/><path d="M1 24h28v4H1z" fill="#4a9fc4"/></svg>
            </button>
            <button aria-label="Trash">
                <svg class="w-6 h-[30px]" viewBox="0 0 24 30"><path d="M0 3h24l-3 24c-1 3-17 3-18 0z" fill="#474b50"/><path d="M5 6l2 20M10 6l1 21M15 6l-1 21M20 6l-2 20" stroke="#4e5257" stroke-width="1"/><ellipse cx="12" cy="3.500" rx="11.500" ry="2.300" fill="#2c3036" stroke="#777b80"/></svg>
            </button>
        </div>
    </footer>
</body>
</html>
